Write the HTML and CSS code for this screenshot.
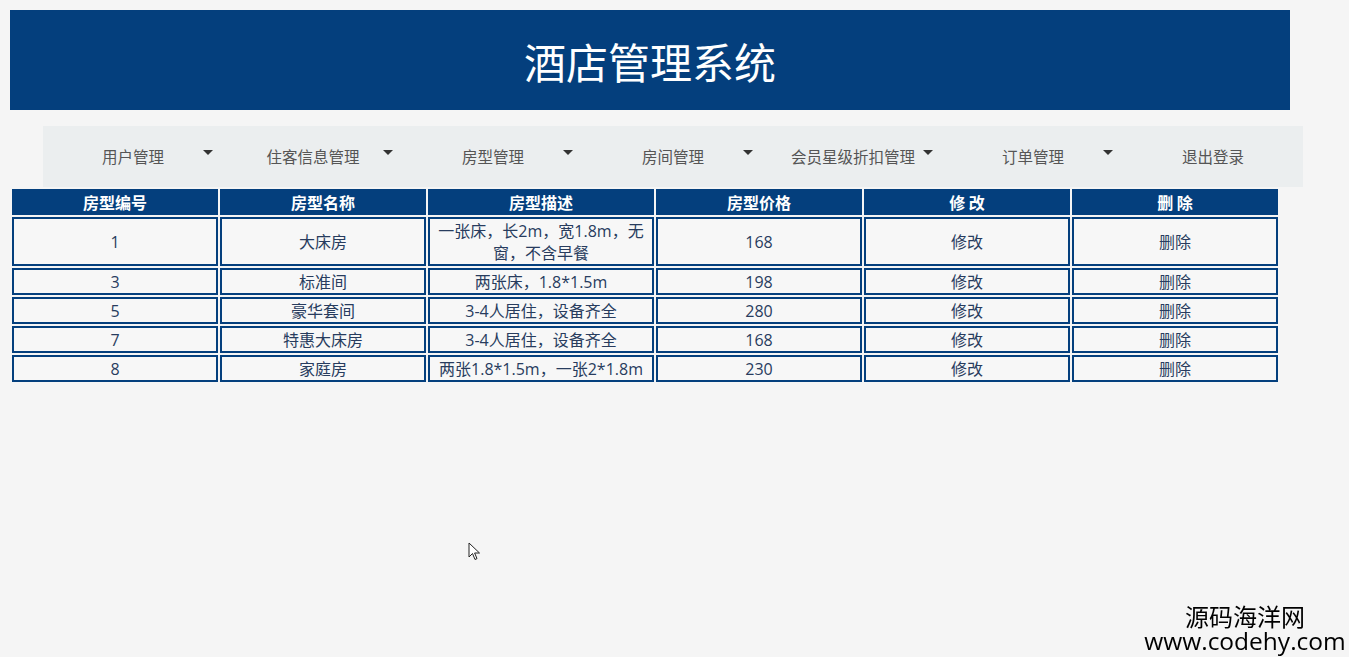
FILE: index.html
```html
<!DOCTYPE html>
<html lang="zh-CN">
<head>
<meta charset="utf-8">
<title>酒店管理系统</title>
<link rel="stylesheet" href="styles.css">
</head>
<body>
<header class="banner"><h1 class="title">酒店管理系统</h1></header>
<nav class="nav">
  <div class="nav-item">用户管理<span class="caret"></span></div>
  <div class="nav-item">住客信息管理<span class="caret"></span></div>
  <div class="nav-item">房型管理<span class="caret"></span></div>
  <div class="nav-item">房间管理<span class="caret"></span></div>
  <div class="nav-item">会员星级折扣管理<span class="caret"></span></div>
  <div class="nav-item">订单管理<span class="caret"></span></div>
  <div class="nav-item">退出登录</div>
</nav>
<table class="grid">
  <colgroup>
    <col class="c-std"><col class="c-std"><col class="c-wide"><col class="c-std"><col class="c-std"><col class="c-std">
  </colgroup>
  <thead>
    <tr><th>房型编号</th><th>房型名称</th><th>房型描述</th><th>房型价格</th><th>修 改</th><th>删 除</th></tr>
  </thead>
  <tbody>
    <tr><td>1</td><td>大床房</td><td>一张床，长2m，宽1.8m，无窗，不含早餐</td><td>168</td><td>修改</td><td>删除</td></tr>
    <tr><td>3</td><td>标准间</td><td>两张床，1.8*1.5m</td><td>198</td><td>修改</td><td>删除</td></tr>
    <tr><td>5</td><td>豪华套间</td><td>3-4人居住，设备齐全</td><td>280</td><td>修改</td><td>删除</td></tr>
    <tr><td>7</td><td>特惠大床房</td><td>3-4人居住，设备齐全</td><td>168</td><td>修改</td><td>删除</td></tr>
    <tr><td>8</td><td>家庭房</td><td>两张1.8*1.5m，一张2*1.8m</td><td>230</td><td>修改</td><td>删除</td></tr>
  </tbody>
</table>
<svg class="cursor" width="13" height="20" viewBox="0 0 13 20"><path d="M1 1 L1 15 L4.5 11.5 L7 17.5 L9 16.6 L6.6 11 L11.5 11 Z" fill="#fff" stroke="#222" stroke-width="1" stroke-linejoin="round"/></svg>
<div class="watermark"><div class="wm-cn">源码海洋网</div><div class="wm-en">www.codehy.com</div></div>
</body>
</html>
```
FILE: styles.css
```css
html, body { margin: 0; }
body {
  padding: 10px;
  background: #f5f5f5;
  font-family: "Open Sans", "Noto Sans CJK SC", sans-serif;
}
.banner {
  width: 1280px;
  height: 100px;
  background: #043f7d;
  display: flex;
  align-items: center;
  justify-content: center;
}
.title {
  margin: 0;
  color: #fff;
  font-family: "Noto Sans CJK SC", sans-serif;
  font-weight: 400;
  font-size: 42px;
  line-height: 1;
  padding-top: 1px;
}
.nav {
  display: flex;
  width: 1260px;
  height: 61px;
  margin: 16px 0 0 33px;
  background: #ebeeef;
}
.nav-item {
  position: relative;
  width: 180px;
  text-align: center;
  line-height: 61px;
  font-size: 15.5px;
  color: #555;
  font-family: "Noto Sans CJK SC", sans-serif;
}
.caret {
  position: absolute;
  right: 10px;
  top: 24px;
  width: 0;
  height: 0;
  border-left: 5px solid transparent;
  border-right: 5px solid transparent;
  border-top: 5px solid #333;
}
.grid {
  border-collapse: separate;
  border-spacing: 2px;
  table-layout: fixed;
  width: 1270px;
  margin: 0;
}
.c-std { width: 206px; }
.c-wide { width: 226px; }
.grid th {
  background: #043f7d;
  color: #fff;
  border: 2px solid #043f7d;
  font-family: "Noto Sans CJK SC", sans-serif;
  font-weight: 700;
  font-size: 16px;
  line-height: 22px;
  padding: 0;
  white-space: pre;
}
.grid td {
  border: 2px solid #043f7d;
  background: #f7f7f7;
  color: #283c5e;
  font-size: 16px;
  line-height: 22px;
  padding: 0.5px 4px;
  text-align: center;
}
.cursor {
  position: fixed;
  left: 468px;
  top: 542px;
}
.watermark {
  position: fixed;
  right: 2px;
  bottom: 3px;
  width: 204px;
  text-align: center;
  color: #000;
}
.wm-cn {
  font-family: "Noto Sans CJK SC", sans-serif;
  font-size: 24px;
  line-height: 25px;
}
.wm-en {
  font-family: "Open Sans", sans-serif;
  font-size: 24.5px;
  line-height: 26px;
}
```
